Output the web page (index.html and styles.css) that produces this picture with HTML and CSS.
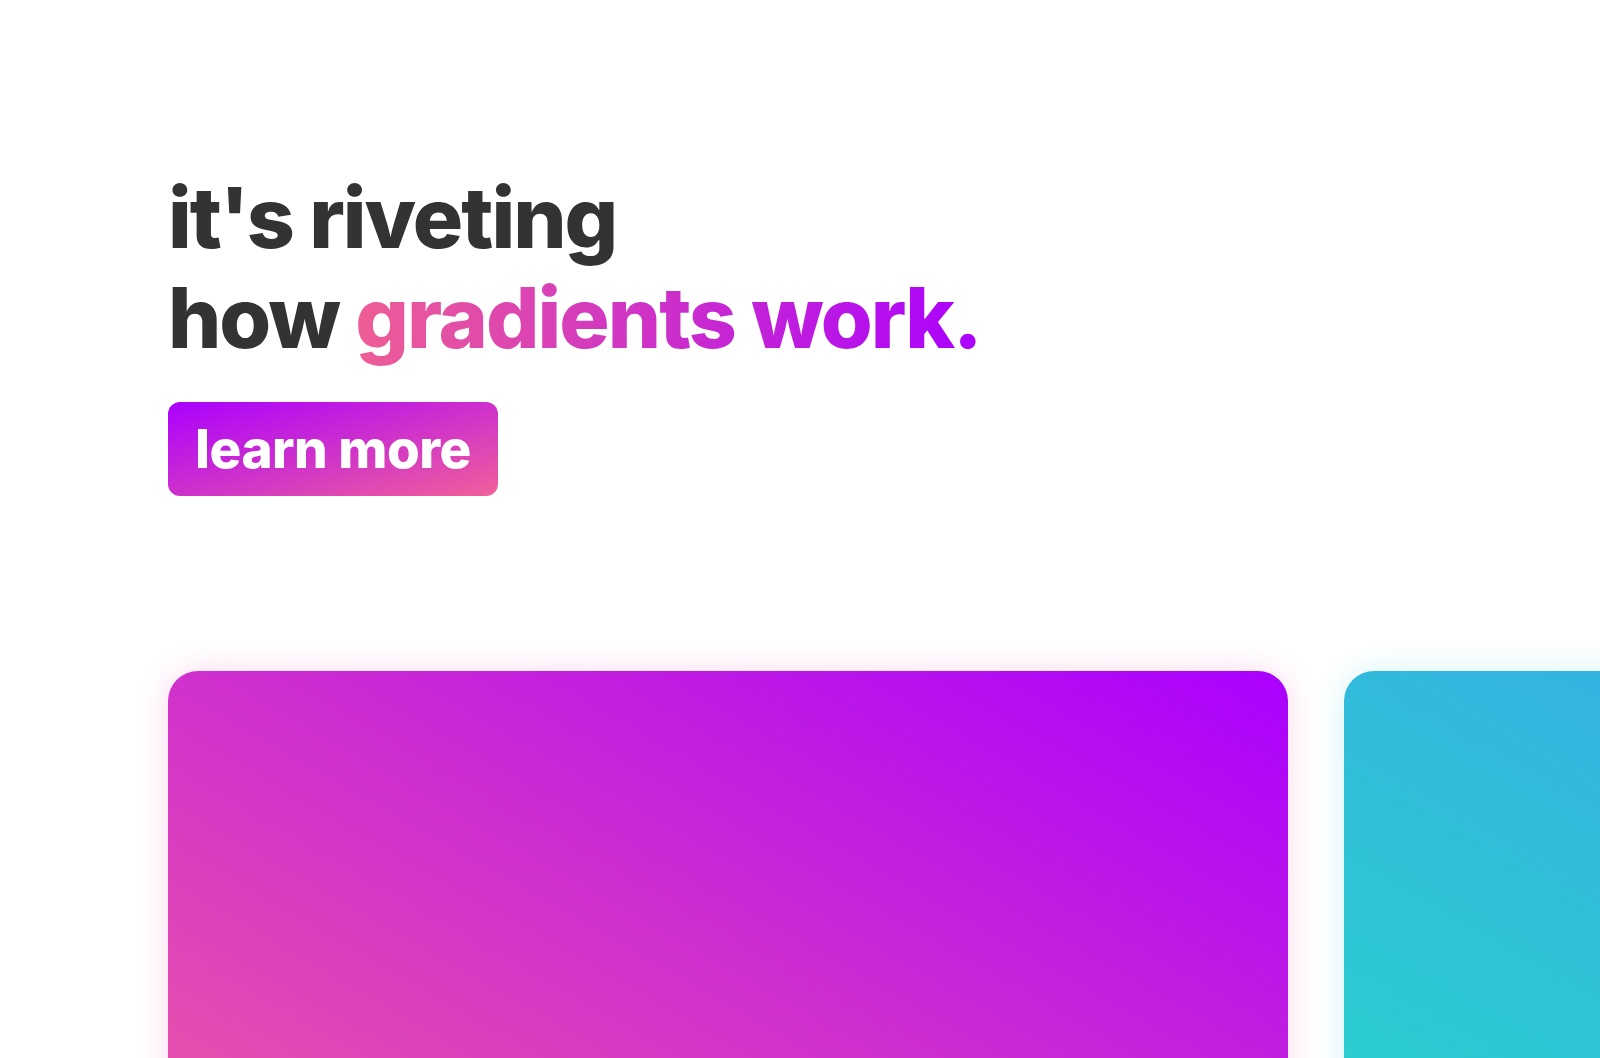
FILE: index.html
```html
<!DOCTYPE html>
<html lang="en">
<head>
<meta charset="utf-8">
<title>gradients</title>
<link rel="stylesheet" href="styles.css">
</head>
<body>
<main class="page">
  <section class="hero">
    <h1 class="headline">it's riveting<br>how <span class="grad-text">gradients work.</span></h1>
    <a class="btn" href="#">learn more</a>
  </section>
  <section class="cards">
    <div class="card card-pink"></div>
    <div class="card card-cyan"></div>
  </section>
</main>
</body>
</html>
```

FILE: styles.css
```css
html, body {
  margin: 0;
  padding: 0;
  background: #ffffff;
}
body {
  overflow-x: hidden;
  font-family: "Inter", "Lato", "Liberation Sans", sans-serif;
}
.page {
  padding: 168px 0 0 168px;
}
.hero {
  display: flex;
  flex-direction: column;
  align-items: flex-start;
}
.headline {
  margin: 0;
  font-size: 84px;
  line-height: 100px;
  font-weight: 800;
  letter-spacing: -2px;
  color: #333333;
}
.grad-text {
  background: linear-gradient(to right, #ee5e95, #aa00ff);
  -webkit-background-clip: text;
  background-clip: text;
  color: transparent;
}
.btn {
  margin-top: 34px;
  width: 330px;
  height: 94px;
  border-radius: 12px;
  display: flex;
  align-items: center;
  justify-content: center;
  box-sizing: border-box;
  background: linear-gradient(to bottom right, #aa00ff, #f0609a);
  color: #ffffff;
  font-size: 53px;
  font-weight: 800;
  letter-spacing: -0.5px;
  text-decoration: none;
}
.cards {
  margin-top: 175px;
  display: flex;
  gap: 56px;
}
.card {
  flex: 0 0 1120px;
  height: 640px;
  border-radius: 30px;
}
.card-pink {
  background: linear-gradient(to top right, #f5629a, #aa00ff);
  box-shadow: 0 0 30px rgba(230, 80, 170, 0.22);
}
.card-cyan {
  background: linear-gradient(to top right, #28d8c8, #3a9cf0);
  box-shadow: 0 0 30px rgba(45, 200, 210, 0.2);
}
```
